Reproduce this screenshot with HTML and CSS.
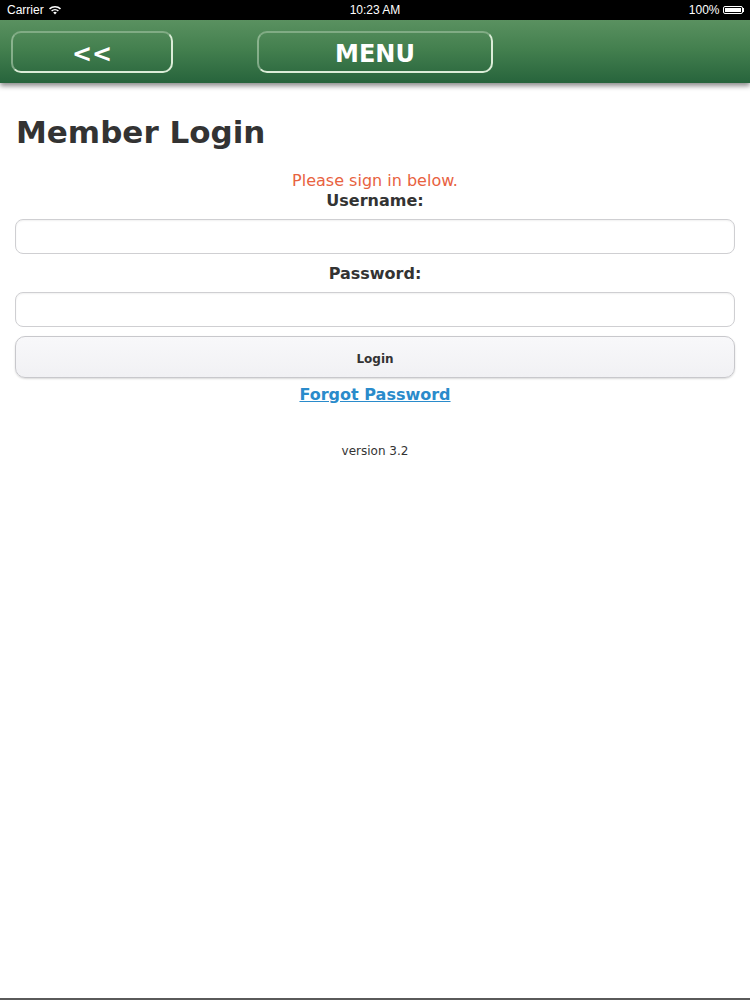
FILE: index.html
```html
<!DOCTYPE html>
<html>
<head>
<meta charset="utf-8">
<link rel="stylesheet" href="styles.css">
</head>
<body>
<div class="status">
  <div class="status-left">Carrier
    <svg class="wifi" width="14" height="10" viewBox="0 0 14 10"><path d="M7 9.5 L5.2 7.6 A2.6 2.6 0 0 1 8.8 7.6 Z" fill="#fff"/><path d="M3.6 6 A4.9 4.9 0 0 1 10.4 6" stroke="#fff" stroke-width="1.5" fill="none"/><path d="M1.5 3.9 A8 8 0 0 1 12.5 3.9" stroke="#fff" stroke-width="1.5" fill="none"/></svg>
  </div>
  <div class="status-time">10:23 AM</div>
  <div class="status-right">100% <span class="battery"><span class="battery-fill"></span></span><span class="battery-tip"></span></div>
</div>
<header class="topbar">
  <a class="navbtn back">&lt;&lt;</a>
  <a class="navbtn menu">MENU</a>
</header>
<main class="content">
  <h1 class="title">Member Login</h1>
  <form class="login">
    <p class="notice">Please sign in below.</p>
    <label class="label">Username:</label>
    <input class="field" type="text">
    <label class="label pw">Password:</label>
    <input class="field" type="password">
    <button class="loginbtn" type="button">Login</button>
    <a class="forgot" href="#">Forgot Password</a>
    <p class="version">version 3.2</p>
  </form>
</main>
<div class="bottomline"></div>
</body>
</html>
```
FILE: styles.css
```css
html, body {
  margin: 0;
  padding: 0;
  background: #fff;
  height: 1000px;
  overflow: hidden;
  font-family: "DejaVu Sans", Verdana, sans-serif;
  color: #333;
}
body {
  display: flex;
  flex-direction: column;
}
.status {
  height: 20px;
  background: #000;
  color: #fff;
  font-family: "Liberation Sans", Arial, sans-serif;
  font-size: 12px;
  display: flex;
  align-items: center;
  justify-content: space-between;
  padding: 0 6px 0 7px;
  position: relative;
}
.status-left {
  display: flex;
  align-items: center;
  gap: 4px;
}
.status-time {
  position: absolute;
  left: 0;
  right: 0;
  text-align: center;
  pointer-events: none;
}
.status-right {
  display: flex;
  align-items: center;
  gap: 3px;
}
.battery {
  width: 20px;
  height: 8px;
  border: 1px solid #fff;
  border-radius: 2px;
  padding: 1px;
  box-sizing: border-box;
  display: inline-flex;
}
.battery-fill {
  flex: 1;
  background: #fff;
}
.battery-tip {
  width: 1.5px;
  height: 4px;
  background: #fff;
  margin-left: -3px;
}
.topbar {
  height: 63px;
  background: linear-gradient(#5a9160 0%, #44804f 45%, #27643c 100%);
  box-shadow: 0 3px 5px rgba(0,0,0,0.45);
  display: flex;
  align-items: center;
  padding: 0 11px;
  gap: 84px;
  position: relative;
  z-index: 2;
}
.navbtn {
  height: 42px;
  box-sizing: border-box;
  border: 2px solid #dcedd8;
  border-top-color: rgba(220, 237, 216, 0.35);
  border-left-color: rgba(220, 237, 216, 0.45);
  border-radius: 10px;
  color: #fff;
  font-weight: bold;
  font-size: 24px;
  display: flex;
  align-items: center;
  justify-content: center;
  text-decoration: none;
  margin-top: 1px;
  padding-top: 3px;
}
.back {
  width: 162px;
}
.menu {
  width: 236px;
}
.content {
  padding: 0 15px;
}
.title {
  margin: 31px 0 0 1px;
  font-size: 31px;
  font-weight: bold;
  line-height: 36px;
  color: #333;
}
.login {
  display: flex;
  flex-direction: column;
  align-items: center;
  margin-top: 21px;
}
.notice {
  margin: 0;
  color: #e8623f;
  font-size: 16px;
  line-height: 20px;
}
.label {
  font-weight: bold;
  font-size: 16px;
  line-height: 20px;
  color: #333;
  margin-bottom: 8px;
}
.label.pw {
  margin-top: 10px;
}
.field {
  width: 100%;
  height: 35px;
  box-sizing: border-box;
  border: 1.5px solid #cfcfd2;
  border-radius: 8px;
  background: #fff;
  margin: 0;
  box-shadow: inset 0 1px 2px rgba(0,0,0,0.06);
}
.loginbtn {
  width: 100%;
  height: 42px;
  margin-top: 9px;
  box-sizing: border-box;
  border: 1.5px solid #c8c8cc;
  border-radius: 10px;
  background: linear-gradient(#f8f8fa, #f1f1f4);
  box-shadow: 0 1px 2px rgba(0,0,0,0.15);
  font-family: "DejaVu Sans", Verdana, sans-serif;
  font-weight: bold;
  font-size: 12px;
  color: #333;
  padding: 4px 0 0;
}
.forgot {
  margin-top: 7px;
  font-size: 16px;
  font-weight: bold;
  color: #2a8bcb;
  text-decoration: underline;
  line-height: 20px;
}
.version {
  margin: 38px 0 0;
  font-size: 12px;
  line-height: 16px;
  color: #333;
}
.bottomline {
  position: absolute;
  left: 0;
  right: 0;
  bottom: 0;
  height: 2px;
  background: #5a5a5a;
}
```
